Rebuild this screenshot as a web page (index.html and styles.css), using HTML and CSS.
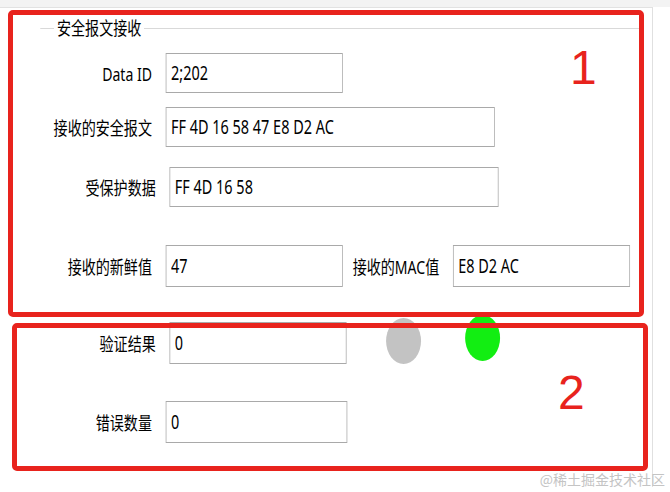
FILE: index.html
```html
<!DOCTYPE html>
<html lang="zh-CN">
<head>
    <meta charset="UTF-8">
    <meta name="viewport" content="width=device-width, initial-scale=1.0">
    <title>安全报文接收</title>
    <link rel="stylesheet" href="styles.css">
</head>
<body>
    <div class="screen">
        <div class="window">
            <div class="panel">
                <fieldset class="group">
                    <legend>安全报文接收</legend>
                    <div class="row">
                        <label class="lbl" for="data-id">Data ID</label>
                        <input class="box" id="data-id" type="text" value="2;202" readonly>
                    </div>
                    <div class="row row-msg">
                        <label class="lbl" for="msg">接收的安全报文</label>
                        <input class="box box-wide" id="msg" type="text" value="FF 4D 16 58 47 E8 D2 AC" readonly>
                    </div>
                    <div class="row row-data shift">
                        <label class="lbl" for="payload">受保护数据</label>
                        <input class="box box-wide" id="payload" type="text" value="FF 4D 16 58" readonly>
                    </div>
                    <div class="row row-tail">
                        <label class="lbl" for="fresh">接收的新鲜值</label>
                        <input class="box" id="fresh" type="text" value="47" readonly>
                        <label class="lbl-inline" for="mac">接收的MAC值</label>
                        <input class="box" id="mac" type="text" value="E8 D2 AC" readonly>
                    </div>
                </fieldset>

                <div class="verify">
                    <div class="row shift">
                        <label class="lbl" for="result">验证结果</label>
                        <input class="box" id="result" type="text" value="0" readonly>
                        <span class="lamp lamp-off"></span>
                        <span class="lamp lamp-on"></span>
                    </div>
                    <div class="row row-errors">
                        <label class="lbl" for="errors">错误数量</label>
                        <input class="box box-errors" id="errors" type="text" value="0" readonly>
                    </div>
                </div>
            </div>
        </div>

        <!-- red callouts over the two areas -->
        <div class="mark mark-1"><span class="mark-num num-1">1</span></div>
        <div class="mark mark-2"><span class="mark-num num-2">2</span></div>

        <div class="watermark">@稀土掘金技术社区</div>
    </div>
</body>
</html>
```

FILE: styles.css
```css
body {
    margin: 0;
    padding: 0;
    background-color: #fff;
    font-family: "Noto Sans", "Noto Sans CJK SC", sans-serif;
    color: #000;
}

.screen {
    position: relative;
    width: 670px;
    height: 492px;
    overflow: hidden;
    background-color: #f3f3f3;
}

/* the form is laid out at its native width and squeezed to fit */
.window {
    width: 882px;
    height: 487px;
    margin-top: 5px;
    background-color: #fff;
    transform: scaleX(0.76);
    transform-origin: 0 0;
}
.panel {
    width: 859px;
    height: 480px;
    margin-top: 7px;
    box-sizing: border-box;
    border-top: 1px solid #e2e2e2;
    border-right: 1px solid #d6d6d6;
}

.group {
    width: 793px;
    margin: 8px 0 0 53px;
    padding: 13px 0 0 0;
    border: none;
    border-top: 1px solid #d9d9d9;
}
.group legend {
    margin-left: 18px;
    padding: 0 4px;
    font-size: 18.5px;
    line-height: 24px;
}

.row {
    display: flex;
    align-items: center;
}
.row-msg {
    margin-top: 14px;
}
.row-data {
    margin-top: 20px;
}
.row-tail {
    margin-top: 38px;
}
.shift {
    padding-left: 5px;
}

.lbl {
    width: 147px;
    flex: none;
    margin-right: 18px;
    text-align: right;
    font-size: 18.5px;
    white-space: nowrap;
}
.verify .lbl {
    width: 200px;
}
.lbl-inline {
    margin: 0 18px 0 13px;
    font-size: 18.5px;
    white-space: nowrap;
}

.box {
    width: 233px;
    height: 40px;
    box-sizing: border-box;
    padding: 0 6px;
    border: 1px solid #a9a9a9;
    background-color: #fff;
    font-family: inherit;
    font-size: 19px;
    color: #000;
    outline: none;
}
.box-wide {
    width: 433px;
}
.row-tail .box {
    height: 42px;
}
.verify .box {
    height: 42px;
}
.box-errors {
    width: 239px;
}

.verify {
    margin-top: 35px;
}
.row-errors {
    margin-top: 37px;
}

/* status lamps */
.lamp {
    flex: none;
    width: 46px;
    height: 46px;
    border-radius: 50%;
    align-self: flex-start;
}
.lamp-off {
    margin: -4px 0 0 52px;
    background-color: #c3c3c3;
}
.lamp-on {
    margin: -7px 0 0 58px;
    background-color: #12ee12;
}

/* callout frames */
.mark {
    position: absolute;
    box-sizing: border-box;
    border: 5px solid #e8231d;
    border-radius: 5px;
}
.mark-1 {
    left: 8px;
    top: 10px;
    width: 636px;
    height: 307px;
}
.mark-2 {
    left: 12px;
    top: 323px;
    width: 636px;
    height: 148px;
}
.mark-num {
    position: absolute;
    font-family: "Liberation Sans", Arial, sans-serif;
    font-size: 48px;
    line-height: 1;
    color: #e8231d;
}
.num-1 {
    left: 557px;
    top: 29px;
}
.num-2 {
    left: 541px;
    top: 41px;
}

.watermark {
    position: absolute;
    right: 5px;
    bottom: 3px;
    font-family: "Noto Sans CJK SC", sans-serif;
    font-size: 14px;
    color: #c4c4c4;
}
```
